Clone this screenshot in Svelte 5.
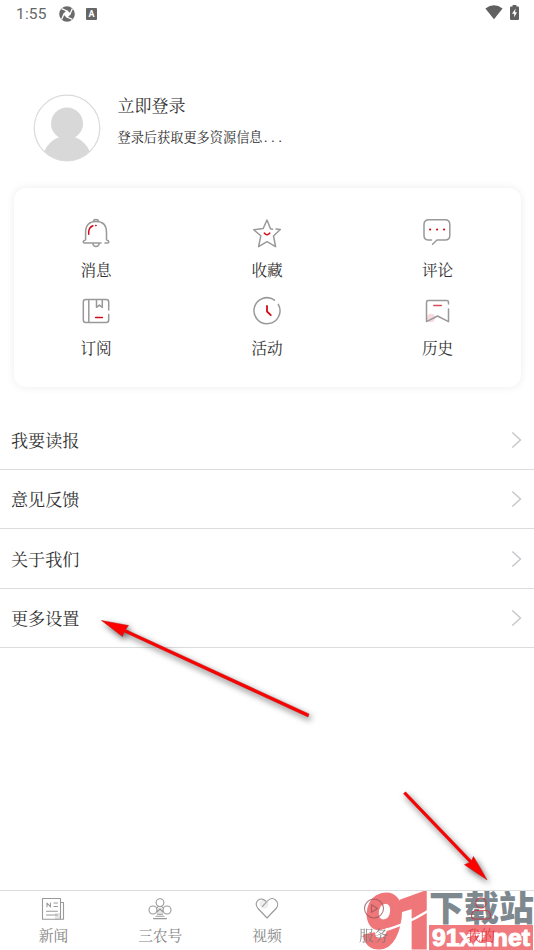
<script>
  const tools = [
    ['bell', '消息'], ['star', '收藏'], ['chat', '评论'],
    ['book', '订阅'], ['clock', '活动'], ['mark', '历史']
  ];
  const rows = ['我要读报', '意见反馈', '关于我们', '更多设置'];
  const tabs = [['news', '新闻'], ['club', '三农号'], ['heart', '视频'], ['play', '服务'], ['me', '我的']];
</script>

<div class="screen">
  <header class="status">
    <span class="time">1:55</span>
    <svg class="ball" width="16" height="16" viewBox="0 0 16 16">
      <circle cx="8" cy="8" r="7.8" fill="#6b6b6b" />
      <path d="M8 4l4 4-4 4-4-4z" fill="#fff" />
      <path d="M2.600 2.600L8 5M13.400 2.600L11 8M13.400 13.400L8 11M2.600 13.400L5 8" stroke="#fff" stroke-width="1.300" />
    </svg>
    <span class="abox">A</span>
    <span class="grow"></span>
    <svg class="wifi" width="18" height="15" viewBox="0 0 18 15"><path d="M.4 3.5Q9-3.2 17.6 3.5L9 14.2z" fill="#606060" /></svg>
    <svg class="battery" width="9" height="15" viewBox="0 0 9 15">
      <path d="M2.6 0h3.8v1.5H8q1 0 1 1v11.4q0 1-1 1H1q-1 0-1-1V2.500q0-1 1-1h1.600z" fill="#606060" />
      <path d="M5.600 3.500L2 8.700h2.200v3.600L7 7.200H5z" fill="#fff" />
    </svg>
  </header>

  <section class="profile">
    <svg class="avatar" width="68" height="68" viewBox="0 0 68 68">
      <defs><clipPath id="face"><circle cx="34" cy="34" r="33" /></clipPath></defs>
      <g clip-path="url(#face)" fill="#d8d8d8"><circle cx="34" cy="29.500" r="16" /><circle cx="34" cy="66.500" r="24.500" /></g>
      <circle cx="34" cy="34" r="32.800" fill="none" stroke="#dadada" stroke-width="1.200" />
    </svg>
    <div class="who">
      <div class="login">立即登录</div>
      <div class="hint">登录后获取更多资源信息<span class="dots">...</span></div>
    </div>
  </section>

  <section class="card">
    {#each tools as [icon, label]}
      <div class="tool">
        <svg class={icon} width="32" height="32" viewBox="0 0 32 32" fill="none" stroke="#999" stroke-width="1.500" stroke-linecap="round" stroke-linejoin="round">
          {#if icon === 'bell'}
            <path d="M13.500 4.300Q13.700 2.500 16 2.500t2.500 1.800M21 26H4.500Q3.200 26 3.200 24.800T5.600 22.700V15.200C5.600 8 9.300 4.600 16 4.600S26.500 8 26.500 15.200v7.500q2.300.8 2.300 2.100T27.500 26H25M12.800 26.500q.5 3 3.200 3t3.200-3" />
            <path d="M8.700 17.300v-2.500q.3-4.300 4.200-6M15.700 8.500h.4" stroke="#d00c16" />
          {:else if icon === 'star'}
            <path d="M21.500 12.200L19.500 11.800 16 3 12.200 11.500 2.700 12.700 9.800 18.800 7.600 29.700 16 24.700 24.600 29.600 22.500 19 29.300 12.500 25 12" />
            <path d="M13.400 16.200q2.600 3 5.300 0" stroke="#d00c16" stroke-width="1.600" />
          {:else if icon === 'chat'}
            <path d="M10.500 24H7q-4-.4-4-4.500V8.500Q3 3.700 8 3.700h16q4.800 0 4.800 4.800v11q0 4.500-4.800 4.500h-8l-4.400 4.300" />
            <path d="M9 13.500h.2M16 13.500h.2M23 13.500h.2" stroke="#d00c16" stroke-width="2" />
          {:else if icon === 'book'}
            <path d="M28.700 15V7q0-2.500-2.500-2.500H5.800Q3.300 4.500 3.300 7v18q0 2.500 2.500 2.500H26q2.700 0 2.700-2.500v-5.500M8.800 4.500v23M16.500 4.700v7.600l2.900-2.200 2.900 2.200V4.700" />
            <path d="M15.600 22.500h6.800" stroke="#d00c16" />
          {:else if icon === 'clock'}
            <path d="M23.500 5.100A13 13 0 1 0 27.300 9.300" />
            <path d="M16 11v5.500l3.800 3.600" stroke="#d00c16" stroke-width="1.800" />
          {:else}
            <circle cx="10" cy="23" r="4.200" fill="#f9dade" stroke="none" />
            <path d="M27.500 9V7.200q0-1.600-1.700-1.600H7.200q-1.700 0-1.700 1.600v19.400L16.500 21 27.500 26.600V14" />
            <path d="M12.800 10.500h7.500" stroke="#d74b5a" />
          {/if}
        </svg>
        <span>{label}</span>
      </div>
    {/each}
  </section>

  <section class="list">
    {#each rows as row}
      <div class="row"><span>{row}</span>
        <svg width="11" height="18" viewBox="0 0 11 18"><path d="M1.300 1.500L9.500 9l-8.200 7.500" fill="none" stroke="#c4c6ca" stroke-width="1.400" /></svg>
      </div>
    {/each}
  </section>

  <nav>
    {#each tabs as [icon, label]}
      <div class="tab {icon}">
        <svg width="26" height="26" viewBox="0 0 26 26" fill="none" stroke="#999" stroke-width="1.100" stroke-linecap="round" stroke-linejoin="round">
          {#if icon === 'news'}
            <path d="M15 17h6v7h-6z" fill="#e5e5e5" stroke="none" />
            <path d="M2.500 2.500h18v20.700h-18zM20.500 6.500h3v16.700h-6M6.500 15.200h11M6.500 19h11M14 7h3.500M14 10.500h3.500M7 10.800V7l3.500 3.800V7" />
          {:else if icon === 'club'}
            <path d="M9 14l4-3 4 3-1 5h-6z" fill="#e9e9e9" stroke="none" />
            <circle cx="13" cy="6.600" r="3.900" /><circle cx="6" cy="14" r="4" /><circle cx="20" cy="14" r="4" />
            <path d="M11.500 10.400L9.500 12M14.500 10.400l2 1.600M10 16l3-3 3 3M10.500 18.300h5M9 20.300h8M6.500 22.600h13" />
          {:else if icon === 'heart'}
            <circle cx="10" cy="8" r="4.500" fill="#ededed" stroke="none" />
            <path d="M8.500 10.400L13.500 5C19-1 26.500 6 22.500 12L13 22 4 12.500C-1 6 6.500 0 11.500 5" />
          {:else if icon === 'play'}
            <circle cx="13" cy="12.500" r="9.500" /><path d="M10.500 8.700l6 3.800-6 3.800z" />
          {:else}
            <circle cx="13" cy="7" r="5.200" /><path d="M3.500 20.500q0-6 5-6h9q5 0 5 6 0 2.500-3 2.500h-13q-3 0-3-2.500z" />
          {/if}
        </svg>
        <span>{label}</span>
      </div>
    {/each}
  </nav>

  <svg class="arrows" width="534" height="950" viewBox="0 0 534 950">
    <g class="shade" fill="#fe0000" stroke="#bd1010" stroke-width=".5">
      <path d="M101.500 620.500L128.500 625.500 125.500 629.500 309 714 308 717 124 632 122.500 636.500z" />
      <path d="M487 879.800L464.500 864.700 469.500 862.500 403.500 793.800 405.500 791.800 471.500 860.500 473.500 856.500z" />
    </g>
  </svg>

  <div class="watermark">
    <svg class="logo" width="66" height="60" viewBox="0 0 66 60">
      <text class="nine" x="-1" y="57" textLength="38" lengthAdjust="spacingAndGlyphs">9</text>
      <text class="one" x="31" y="58" textLength="43" lengthAdjust="spacingAndGlyphs">1</text>
      <path class="swoosh" d="M14 42Q40 36 64 21" />
    </svg>
    <div class="brand">
      <div class="site">下载站</div>
      <svg class="domain" width="104" height="25"><text x="3" y="21" textLength="98" lengthAdjust="spacingAndGlyphs">91xz.net</text></svg>
    </div>
  </div>
</div>

<style>
  :global(body) { background: #fff; }
  .screen { position: relative; width: 534px; height: 950px; overflow: hidden; display: flex; flex-direction: column; background: #fff; color: #303030; font-family: "Noto Serif CJK SC", "Source Han Serif SC", "Noto Sans CJK SC", serif; }
  svg { display: block; flex: none; }
  .status { height: 28px; box-sizing: border-box; padding: 0 15px 0 16px; display: flex; align-items: center; font-family: Roboto, sans-serif; color: #666; }
  .time { width: 43px; font-size: 15.500px; letter-spacing: .2px; }
  .ball { margin-top: -1px; }
  .abox { margin-left: 11px; width: 11px; height: 12px; background: #666; color: #fff; font: bold 9px/12px Roboto, sans-serif; text-align: center; border-radius: 1px; }
  .grow { flex: 1; }
  .wifi { margin-right: 7px; margin-top: -3px; }
  .battery { margin-top: -3px; }
  .profile { height: 160px; box-sizing: border-box; padding: 66px 33px 0 32.500px; display: flex; }
  .who { margin-left: 17px; }
  .login { font-size: 17px; line-height: 24px; margin-top: -1.500px; }
  .hint { font-size: 13.200px; line-height: 20px; margin-top: 10px; white-space: nowrap; }
  .dots { letter-spacing: 2.900px; margin-left: 1px; }
  .card { margin: 0 13px 0 14px; height: 199px; box-sizing: border-box; padding: 29px 0 0; display: grid; grid-template-columns: 164px 178px 163px; grid-template-rows: 78px 78px; border-radius: 12px; box-shadow: 0 0 9px rgba(0, 0, 0, .08); }
  .tool { display: flex; flex-direction: column; align-items: center; }
  .tool span { font-size: 15.600px; line-height: 22px; margin-top: 9px; }
  .chat, .mark { margin-left: -2px; }
  .chat { margin-top: -1px; margin-bottom: 1px; }
  .list { margin-top: 23.700px; }
  .row { height: 59.330px; box-sizing: border-box; padding: 0 12px 0 11px; border-bottom: 1px solid #dcdcdc; display: flex; align-items: center; justify-content: space-between; font-size: 17.100px; }
  .row span { margin-top: -.6px; }
  nav { position: relative; z-index: 2; margin-top: auto; height: 60px; box-sizing: border-box; border-top: 1px solid #ddd; display: grid; grid-template-columns: repeat(5, 1fr); }
  .tab { padding-top: 5px; display: flex; flex-direction: column; align-items: center; color: #858585; }
  .tab span { font-size: 14.700px; line-height: 20px; margin-top: 3px; }
  .play { color: #777; opacity: .8; }
  .play svg { stroke: #99585b; }
  .me { color: #e02733; opacity: .75; }
  .me svg { stroke: #d6272f; }
  .arrows { position: absolute; inset: 0; pointer-events: none; }
  .shade { filter: drop-shadow(2px 3px 3px rgba(0, 0, 0, .6)); }
  .watermark { position: absolute; z-index: 1; right: 0; bottom: 0; width: 170px; height: 60px; display: flex; }
  .logo { opacity: .86; overflow: visible; }
  .logo text { fill: #ed6064; stroke: #ed6064; stroke-width: 3px; }
  .nine { font: bold italic 76px "Liberation Sans", sans-serif; }
  .one { font: 900 78px Roboto, sans-serif; }
  .swoosh { fill: none; stroke: #fff; stroke-width: 2.500px; }
  .brand { width: 105px; margin-left: -1px; }
  .site { height: 35px; font: 900 35px/31px "Noto Sans CJK SC", sans-serif; color: #7e888f; white-space: nowrap; }
  .domain { background: #f07a7e; overflow: visible; }
  .domain text { font: bold 24px "Liberation Sans", sans-serif; fill: #fff; stroke: #fff; stroke-width: 1px; }
</style>
